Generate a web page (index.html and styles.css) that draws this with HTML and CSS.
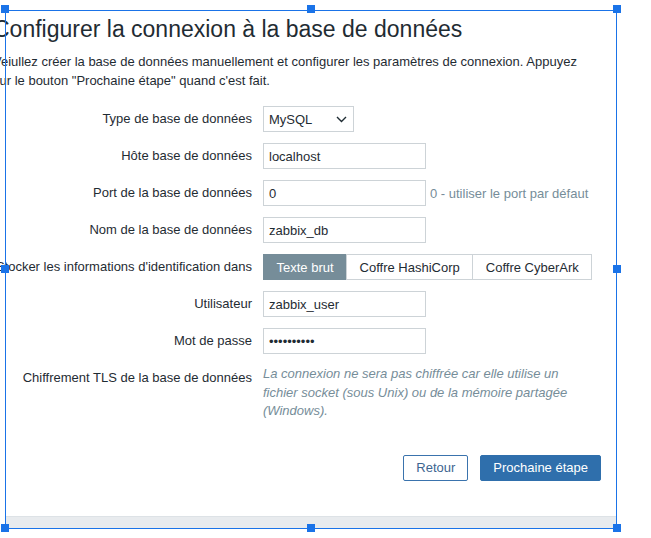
FILE: index.html
```html
<!DOCTYPE html>
<html lang="fr">
<head>
<meta charset="utf-8">
<title>Configurer la connexion à la base de données</title>
<link rel="stylesheet" href="styles.css">
</head>
<body>
<div class="panel">
  <div class="content">
    <h1 class="title">Configurer la connexion à la base de données</h1>
    <p class="intro">Veiullez créer la base de données manuellement et configurer les paramètres de connexion. Appuyez sur le bouton "Prochaine étape" quand c'est fait.</p>
    <div class="form">
      <div class="label">Type de base de données</div>
      <div class="field">
        <div class="select"><span>MySQL</span>
          <svg class="chevron" width="11" height="7" viewBox="0 0 11 7"><path d="M1 1l4.5 4.5L10 1" fill="none" stroke="#1f2c33" stroke-width="1.4"/></svg>
        </div>
      </div>

      <div class="label">Hôte base de données</div>
      <div class="field"><input class="input" type="text" value="localhost"></div>

      <div class="label">Port de la base de données</div>
      <div class="field"><input class="input" type="text" value="0"><span class="hint">0 - utiliser le port par défaut</span></div>

      <div class="label">Nom de la base de données</div>
      <div class="field"><input class="input" type="text" value="zabbix_db"></div>

      <div class="label">Stocker les informations d'identification dans</div>
      <div class="field">
        <div class="segmented">
          <span class="seg seg-on">Texte brut</span><span class="seg">Coffre HashiCorp</span><span class="seg">Coffre CyberArk</span>
        </div>
      </div>

      <div class="label">Utilisateur</div>
      <div class="field"><input class="input" type="text" value="zabbix_user"></div>

      <div class="label">Mot de passe</div>
      <div class="field"><input class="input" type="password" value="zabbixpass"></div>

      <div class="label">Chiffrement TLS de la base de données</div>
      <div class="field field-top"><p class="note">La connexion ne sera pas chiffrée car elle utilise un fichier socket (sous Unix) ou de la mémoire partagée (Windows).</p></div>
    </div>
    <div class="actions">
      <button class="btn btn-alt" type="button">Retour</button>
      <button class="btn btn-primary" type="button">Prochaine étape</button>
    </div>
  </div>
  <div class="strip"></div>
</div>

<div class="selection"></div>
<span class="handle h-tl"></span>
<span class="handle h-tm"></span>
<span class="handle h-tr"></span>
<span class="handle h-ml"></span>
<span class="handle h-mr"></span>
<span class="handle h-bl"></span>
<span class="handle h-bm"></span>
<span class="handle h-br"></span>
</body>
</html>
```

FILE: styles.css
```css
* { box-sizing: border-box; }

html, body {
  margin: 0;
  padding: 0;
  background: #ffffff;
  overflow: hidden;
}

body {
  font-family: "Liberation Sans", Arial, sans-serif;
  font-size: 13px;
  color: #1f2c33;
  width: 651px;
  height: 538px;
  position: relative;
}

.panel {
  width: 611px;
  margin-left: 5px;
}

.content {
  margin-left: -12px;
  width: 623px;
  padding: 15px 15px 35px 0;
}

.title {
  margin: 0;
  font-size: 23px;
  font-weight: normal;
  line-height: 28px;
  white-space: nowrap;
  color: #1f2c33;
}

.intro {
  margin: 10px 0 0;
  line-height: 18.5px;
  width: 596px;
}

.form {
  margin-top: 16px;
  display: grid;
  grid-template-columns: 259px 1fr;
  column-gap: 11px;
  row-gap: 11px;
}

.label {
  text-align: right;
  line-height: 26px;
  white-space: nowrap;
}

.field {
  display: flex;
  align-items: center;
  gap: 4px;
  min-height: 26px;
}

.field-top { align-items: flex-start; }

.input {
  width: 163px;
  height: 26px;
  border: 1px solid #cdd3d7;
  border-radius: 0;
  padding: 0 5px;
  margin: 0;
  font-family: "Liberation Sans", Arial, sans-serif;
  font-size: 13px;
  color: #1f2c33;
  background: #ffffff;
  outline: none;
}

.select {
  width: 91px;
  height: 26px;
  border: 1px solid #cdd3d7;
  padding: 0 6px 0 5px;
  display: flex;
  align-items: center;
  justify-content: space-between;
  background: #ffffff;
}

.chevron { display: block; }

.hint {
  color: #768d99;
  white-space: nowrap;
}

.segmented {
  display: flex;
  height: 26px;
}

.seg {
  display: flex;
  align-items: center;
  padding: 0 12.5px;
  border: 1px solid #cdd3d7;
  margin-left: -1px;
  background: #ffffff;
  white-space: nowrap;
}

.seg:first-child { margin-left: 0; }

.seg-on {
  background: #768d99;
  border-color: #768d99;
  color: #ffffff;
}

.note {
  margin: 0;
  width: 320px;
  line-height: 18.5px;
  font-style: italic;
  color: #768d99;
}

.actions {
  margin-top: 34.5px;
  display: flex;
  justify-content: flex-end;
  gap: 12px;
}

.btn {
  height: 26px;
  padding: 0 12px;
  border-radius: 2px;
  font-family: "Liberation Sans", Arial, sans-serif;
  font-size: 13px;
  line-height: 24px;
  margin: 0;
  cursor: pointer;
}

.btn-alt {
  background: #ffffff;
  border: 1px solid #3a73ad;
  color: #3d6590;
}

.btn-primary {
  background: #2f6fac;
  border: 1px solid #2f6fac;
  color: #ffffff;
}

.strip {
  height: 12px;
  background: #e8ebee;
  border-top: 1px solid #dde2e6;
}

/* selection frame overlay */
.selection {
  position: absolute;
  left: 5px;
  top: 10px;
  width: 612px;
  height: 519px;
  border: 1px solid #1a73e8;
  pointer-events: none;
}

.handle {
  position: absolute;
  width: 8px;
  height: 8px;
  background: #1a73e8;
}

.h-tl { left: 1px; top: 5px; }
.h-tm { left: 307px; top: 5px; }
.h-tr { left: 613px; top: 5px; }
.h-ml { left: 1px; top: 265px; }
.h-mr { left: 613px; top: 265px; }
.h-bl { left: 1px; top: 524px; }
.h-bm { left: 307px; top: 524px; }
.h-br { left: 613px; top: 524px; }
```
